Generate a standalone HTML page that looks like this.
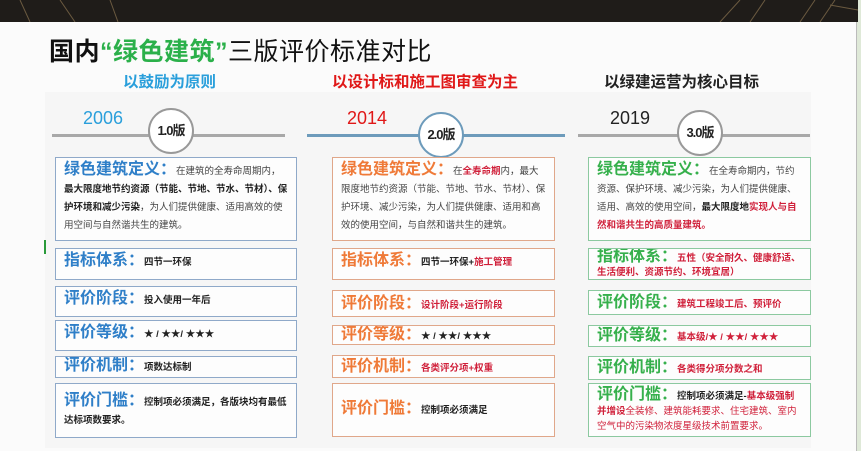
<!DOCTYPE html>
<html><head><meta charset="utf-8"><style>
*{margin:0;padding:0;box-sizing:border-box}
body{width:861px;height:451px;overflow:hidden;background:#dfe9d8;font-family:"Liberation Sans","Noto Sans CJK SC",sans-serif;position:relative}
.page{position:absolute;left:0;top:0;width:857px;height:451px;background:#fbfbfb}
.top{position:absolute;left:0;top:0;width:858px;height:22px;background:#1f1c19;overflow:hidden}
.a{position:absolute;white-space:nowrap}
.box{position:absolute;background:#fdfdfd;border:1.5px solid #8fa9c9;font-size:9.5px;color:#444;line-height:18px;padding:3px 8px;overflow:hidden}
.b2{border-color:#e0a78a}.b3{border-color:#8cc9a0}
.h{font-size:16px;font-weight:bold}
.h1{color:#2f7fc8}.h2{color:#ef7a38}.h3{color:#36b04c}
.k{font-weight:bold;color:#222}.r{color:#d0203a;font-weight:bold}
.line{position:absolute;height:2.5px;top:134px;background:#a8a8a8}
.c{position:absolute;width:46px;height:46px;border-radius:50%;border:2px solid #999;background:#fff;font-weight:bold;font-size:13px;text-align:center;line-height:42px;color:#222;letter-spacing:-1px}
.y{position:absolute;top:108px;font-size:18px}
</style></head><body>
<div class="page"></div>
<div class="top"><svg width="858" height="22"><g stroke="#6b5a40" stroke-width="1" fill="none"><path d="M20 0L30 22M60 0L75 22M110 0L118 22M720 22L740 0M750 22L765 0M800 22L815 0M820 22L835 0M830 5L858 10"/></g></svg></div>
<div class="a" style="left:49px;top:32px;font-size:25px;color:#111;letter-spacing:0.5px"><b>国内</b><b style="color:#2bb04a">“绿色建筑”</b>三版评价标准对比</div>
<div class="a" style="left:123px;top:70px;font-size:15.5px;color:#2a9fdb;font-weight:bold">以鼓励为原则</div>
<div class="a" style="left:332px;top:70px;font-size:15.5px;color:#e01818;font-weight:bold">以设计标和施工图审查为主</div>
<div class="a" style="left:604px;top:70px;font-size:15.5px;color:#222;font-weight:bold">以绿建运营为核心目标</div>
<div class="a" style="left:45px;top:92px;width:766px;height:356px;background:#f6f6f6"></div>
<div class="line" style="left:52px;width:233px"></div>
<div class="line" style="left:307px;width:258px;background:#6d9bbb"></div>
<div class="line" style="left:578px;width:232px"></div>
<div class="y" style="left:83px;color:#2a9fdb">2006</div>
<div class="y" style="left:347px;color:#e01818">2014</div>
<div class="y" style="left:610px;color:#222">2019</div>
<div class="c" style="left:148px;top:108px">1.0版</div>
<div class="c" style="left:418px;top:112px;border-color:#6d9bbb">2.0版</div>
<div class="c" style="left:677px;top:110px">3.0版</div>

<div class="box" style="left:55px;top:157px;width:242px;height:84px"><span class="h h1">绿色建筑定义：</span>在建筑的全寿命周期内，<span class="k">最大限度地节约资源（节能、节地、节水、节材）、保护环境和减少污染</span>，为人们提供健康、适用高效的使用空间与自然谐共生的建筑。</div>
<div class="box" style="left:55px;top:248px;width:242px;height:32px"><span class="h h1">指标体系：</span><span class="k">四节一环保</span></div>
<div class="box" style="left:55px;top:286px;width:242px;height:31px"><span class="h h1">评价阶段：</span><span class="k">投入使用一年后</span></div>
<div class="box" style="left:55px;top:320px;width:242px;height:31px"><span class="h h1">评价等级：</span><span class="k">★ / ★★/ ★★★</span></div>
<div class="box" style="left:55px;top:356px;width:242px;height:22px;line-height:14px;padding-top:2px"><span class="h h1">评价机制：</span><span class="k">项数达标制</span></div>
<div class="box" style="left:55px;top:383px;width:242px;height:55px;padding-top:8px"><span class="h h1">评价门槛：</span><span class="k">控制项必须满足，各版块均有最低达标项数要求。</span></div>

<div class="box b2" style="left:332px;top:157px;width:223px;height:84px"><span class="h h2">绿色建筑定义：</span>在<span class="r">全寿命期</span>内，最大限度地节约资源（节能、节地、节水、节材）、保护环境、减少污染，为人们提供健康、适用和高效的使用空间，与自然和谐共生的建筑。</div>
<div class="box b2" style="left:332px;top:248px;width:223px;height:32px"><span class="h h2">指标体系：</span><span class="k">四节一环保+</span><span class="r">施工管理</span></div>
<div class="box b2" style="left:332px;top:290px;width:223px;height:27px;line-height:19px"><span class="h h2">评价阶段：</span><span class="r">设计阶段+运行阶段</span></div>
<div class="box b2" style="left:332px;top:325px;width:223px;height:20px;line-height:13px;padding-top:2px"><span class="h h2">评价等级：</span><span class="k">★ / ★★/ ★★★</span></div>
<div class="box b2" style="left:332px;top:355px;width:223px;height:23px;line-height:15px"><span class="h h2">评价机制：</span><span class="r">各类评分项+权重</span></div>
<div class="box b2" style="left:332px;top:383px;width:223px;height:54px;padding-top:16px"><span class="h h2">评价门槛：</span><span class="k">控制项必须满足</span></div>

<div class="box b3" style="left:588px;top:157px;width:223px;height:84px"><span class="h h3">绿色建筑定义：</span>在全寿命期内，节约资源、保护环境、减少污染，为人们提供健康、适用、高效的使用空间，<span class="k">最大限度地</span><span class="r">实现人与自然和谐共生的高质量建筑。</span></div>
<div class="box b3" style="left:588px;top:248px;width:223px;height:32px;line-height:14px;padding-top:1px"><span class="h h3">指标体系：</span><span class="r">五性（安全耐久、健康舒适、生活便利、资源节约、环境宜居）</span></div>
<div class="box b3" style="left:588px;top:290px;width:223px;height:25px;line-height:17px"><span class="h h3">评价阶段：</span><span class="r">建筑工程竣工后、预评价</span></div>
<div class="box b3" style="left:588px;top:325px;width:223px;height:22px;line-height:14px"><span class="h h3">评价等级：</span><span class="r">基本级/★ / ★★/ ★★★</span></div>
<div class="box b3" style="left:588px;top:356px;width:223px;height:24px;line-height:16px"><span class="h h3">评价机制：</span><span class="r">各类得分项分数之和</span></div>
<div class="box b3" style="left:588px;top:383px;width:223px;height:54px;line-height:15px"><span class="h h3">评价门槛：</span><span class="k">控制项必须满足-</span><span class="r">基本级强制</span><br><span class="r">并增设</span><span style="color:#d0203a">全装修、建筑能耗要求、住宅建筑、室内空气中的污染物浓度星级技术前置要求。</span></div>
<div class="a" style="left:44px;top:240px;width:2px;height:14px;background:#2a9a3a"></div>
<div class="a" style="left:856px;top:22px;width:1px;height:429px;background:#bbb"></div>
</body></html>
